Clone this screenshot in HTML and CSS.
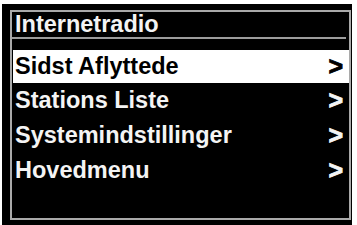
FILE: index.html
```html
<!DOCTYPE html>
<html>
<head>
  <title>Internetradio</title>
  <link rel="stylesheet" href="styles.css">
</head>
<body>
  <div class="screen">
    <div class="frame">
      <div class="title">Internetradio</div>
      <div class="divider"></div>
      <ul class="menu">
        <li class="item selected"><span>Sidst Aflyttede</span><span class="arrow">&gt;</span></li>
        <li class="item"><span>Stations Liste</span><span class="arrow">&gt;</span></li>
        <li class="item"><span>Systemindstillinger</span><span class="arrow">&gt;</span></li>
        <li class="item"><span>Hovedmenu</span><span class="arrow">&gt;</span></li>
      </ul>
    </div>
  </div>
</body>
</html>
```

FILE: styles.css
```css
html, body {
  margin: 0;
  padding: 0;
  background: #fff;
}
body {
  font-family: "Liberation Sans", Arial, sans-serif;
  font-weight: bold;
  font-size: 23.5px;
  color: #f4f4f4;
}
.screen {
  margin: 4px 5px 0 2px;
  height: 221px;
  background: #000;
  padding: 6px 1px 5px 8px;
  box-sizing: border-box;
}
.frame {
  height: 100%;
  border: 2px solid #a9a9a9;
  box-sizing: border-box;
  display: flex;
  flex-direction: column;
}
.title {
  height: 25px;
  line-height: 25px;
  padding-left: 3px;
}
.divider {
  height: 2px;
  margin-right: 3px;
  background: #9c9c9c;
}
.menu {
  list-style: none;
  margin: 11px 0 0 1px;
  padding: 0;
}
.item {
  display: flex;
  justify-content: space-between;
  align-items: center;
  height: 34px;
  line-height: 33px;
  padding: 0 6px 0 2px;
}
.item:nth-child(2),
.item:nth-child(3) {
  height: 35px;
}
.selected {
  height: 33px;
  background: #fff;
  color: #000;
}
.arrow {
  font-size: 25px;
  -webkit-text-stroke: 0.8px currentColor;
}
```
